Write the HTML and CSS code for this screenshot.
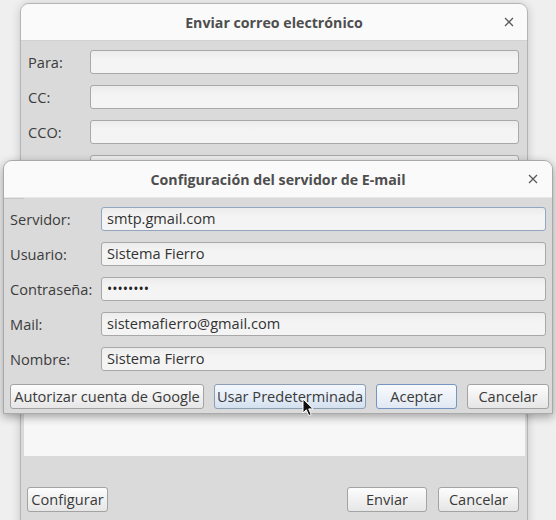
FILE: index.html
```html
<!DOCTYPE html>
<html lang="es">
<head>
<meta charset="utf-8">
<title>Enviar correo electrónico</title>
<link rel="stylesheet" href="styles.css">
</head>
<body>
<div class="desktop">
  <div class="win back">
    <div class="titlebar">
      <span class="title">Enviar correo electrónico</span>
      <span class="close"><svg width="10" height="10" viewBox="0 0 10 10"><path d="M1 1L9 9M9 1L1 9" stroke="#5a5a5a" stroke-width="1.3" fill="none"/></svg></span>
    </div>
    <div class="body back-body">
      <div class="form back-form">
        <label>Para:</label><div class="field"></div>
        <label>CC:</label><div class="field"></div>
        <label>CCO:</label><div class="field"></div>
        <label>Asunto:</label><div class="field"></div>
      </div>
      <div class="textarea"></div>
      <div class="btnrow back-btns">
        <button class="btn w81">Configurar</button>
        <span class="spacer"></span>
        <button class="btn w80">Enviar</button>
        <button class="btn w81">Cancelar</button>
      </div>
    </div>
  </div>

  <div class="win front">
    <div class="titlebar">
      <span class="title">Configuración del servidor de E-mail</span>
      <span class="close"><svg width="10" height="10" viewBox="0 0 10 10"><path d="M1 1L9 9M9 1L1 9" stroke="#5a5a5a" stroke-width="1.3" fill="none"/></svg></span>
    </div>
    <div class="body front-body">
      <div class="stub"></div>
      <div class="form front-form">
        <label>Servidor:</label><div class="field focus">smtp.gmail.com</div>
        <label>Usuario:</label><div class="field">Sistema Fierro</div>
        <label>Contraseña:</label><div class="field dots">••••••••</div>
        <label>Mail:</label><div class="field">sistemafierro@gmail.com</div>
        <label>Nombre:</label><div class="field">Sistema Fierro</div>
      </div>
      <div class="btnrow front-btns">
        <button class="btn w194">Autorizar cuenta de Google</button>
        <button class="btn hover w152">Usar Predeterminada</button>
        <button class="btn default w81">Aceptar</button>
        <button class="btn w82">Cancelar</button>
      </div>
    </div>
  </div>

  <svg class="cursor" width="14" height="20" viewBox="0 0 14 20">
    <path d="M1 1 L1 15 L4.3 11.8 L6.8 17.6 L9.2 16.6 L6.7 10.9 L11.2 10.9 Z" fill="#111" stroke="#fff" stroke-width="1" stroke-linejoin="round"/>
  </svg>
</div>
</body>
</html>
```
FILE: styles.css
```css
* { box-sizing: border-box; }
html, body { margin: 0; padding: 0; }
body {
  width: 556px;
  height: 520px;
  overflow: hidden;
  background: #efefef;
  font-family: "Open Sans", "Noto Sans", "DejaVu Sans", sans-serif;
  font-size: 14.6px;
  color: #3c3c3c;
}
.desktop {
  position: relative;
  width: 556px;
  height: 520px;
  overflow: hidden;
}
.win {
  position: absolute;
  display: flex;
  flex-direction: column;
  background: #dadada;
  border: 1px solid #a9a9a9;
  border-radius: 9px 9px 0 0;
}
.back {
  left: 20px;
  top: 3px;
  width: 508px;
  height: 560px;
  box-shadow: 0 1px 10px rgba(0,0,0,0.18);
  border-color: #b4b4b4;
}
.front {
  left: 3px;
  top: 160px;
  width: 550px;
  height: 254px;
  box-shadow: 0 3px 10px rgba(0,0,0,0.35);
}
.titlebar {
  position: relative;
  height: 37px;
  flex: none;
  display: flex;
  align-items: center;
  justify-content: center;
  background: #fafafa;
  border-bottom: 1px solid #d2d2d2;
  border-radius: 8px 8px 0 0;
}
.front .titlebar { border-bottom-color: #e6e6e6; }
.title {
  font-weight: 700;
  font-size: 14.2px;
  color: #4e4e4e;
}
.close {
  position: absolute;
  right: 14px;
  top: 13px;
  width: 10px;
  height: 10px;
  display: block;
}
.close svg { display: block; }
.back .close { right: 13px; }

.body { flex: 1; display: flex; flex-direction: column; }
.back-body { padding: 9px 8px 0 3px; }
.front-body { padding: 0 6px 0 6px; position: relative; }
.stub {
  position: absolute;
  left: 0;
  top: 0;
  width: 20px;
  height: 1px;
  background: #c6c6c6;
}

.form {
  display: grid;
  row-gap: 11px;
  align-items: center;
}
.back-form { grid-template-columns: 62px 1fr; padding-left: 4px; }
.front-form { grid-template-columns: 91px 1fr; margin-top: 9px; }
label { line-height: 23px; color: #3c3c3c; white-space: nowrap; }
.field {
  height: 24px;
  border: 1px solid #a8a8a8;
  border-radius: 3px;
  background: linear-gradient(#ececec, #f4f4f4 40%, #f4f4f4);
  padding: 0 5px;
  line-height: 21px;
  color: #333;
  white-space: nowrap;
}
.field.focus { border-color: #93a6bf; }
.field.dots { font-size: 14px; letter-spacing: 0; color: #222; }

.textarea {
  margin-top: 11px;
  height: 266px;
  background: #f7f7f7;
  margin-right: -6px;
}

.btnrow { display: flex; gap: 11px; }
.back-btns { margin-top: 31px; padding-left: 3px; }
.front-btns { margin-top: 13px; gap: 10px; }
.spacer { flex: 1; }
.btn {
  flex: none;
  height: 25px;
  padding: 0;
  font-family: inherit;
  font-size: 14.6px;
  color: #3a3a3a;
  border: 1px solid #a3a3a3;
  border-radius: 3px;
  background: linear-gradient(#fdfdfd, #f0f0f0 55%, #e6e6e6);
  white-space: nowrap;
  line-height: 21px;
  overflow: visible;
}
.btn.hover {
  border-color: #8c9eb6;
  background: linear-gradient(#f4f8fd, #e6eef8 50%, #d4e0ee);
}
.btn.default {
  border-color: #7595c2;
  background: linear-gradient(#f8fafd, #edf2f9 50%, #e0e8f3);
}
.w80 { width: 80px; }
.w81 { width: 81px; }
.w82 { width: 82px; }
.w152 { width: 152px; }
.w194 { width: 194px; }

.cursor {
  position: absolute;
  left: 302px;
  top: 398px;
}
```
